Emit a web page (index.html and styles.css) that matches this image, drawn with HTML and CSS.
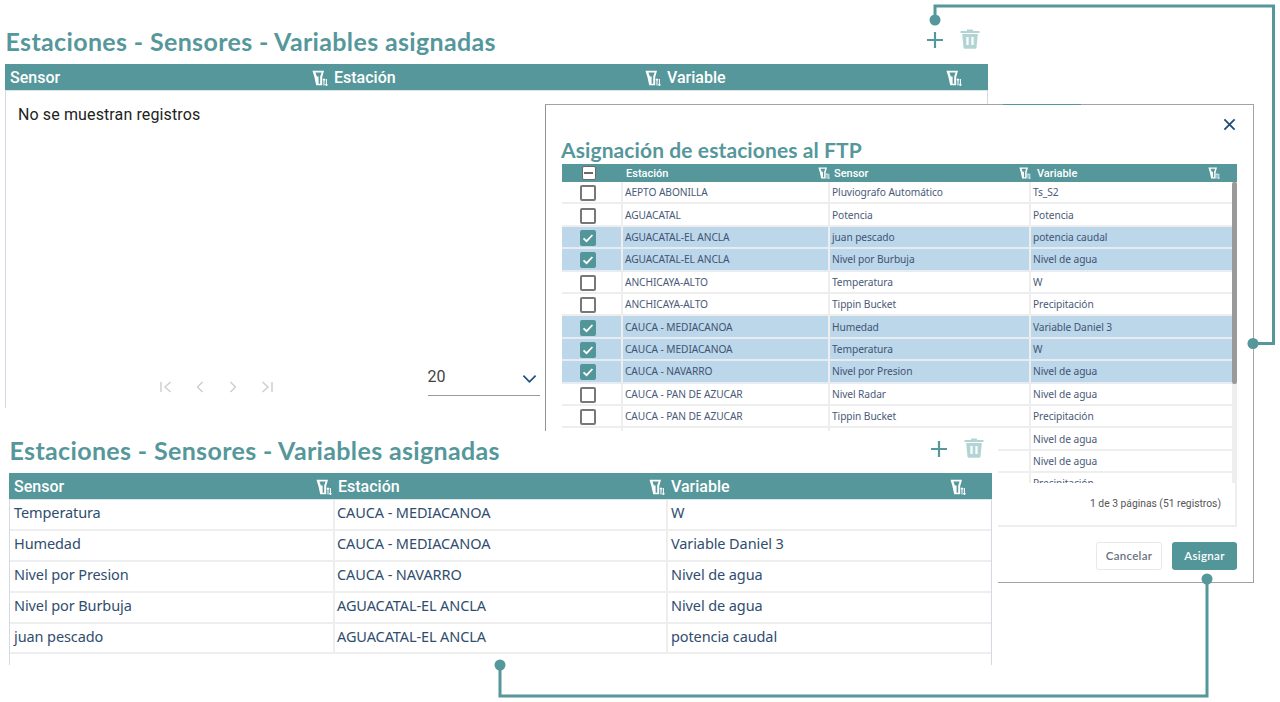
FILE: index.html
```html
<!DOCTYPE html>
<html lang="es">
<head>
<meta charset="utf-8">
<title>Estaciones - Sensores - Variables asignadas</title>
<link rel="stylesheet" href="styles.css">
</head>
<body>
<svg class="sprite" width="0" height="0" aria-hidden="true">
  <symbol id="filter" viewBox="0 0 16 16">
    <path fill-rule="evenodd" d="M.5 .8H12L10.200 7V15.200H4.200L2.400 7ZM3.400 2.400L4.900 6.400H6.600V13.800H8.200V6.400L9.600 2.400Z" fill="currentColor"/>
    <path d="M12 15.500V9M10.900 10.200L12 9L13.100 10.200M14.400 9V15.500M13.300 14.300L14.400 15.500L15.500 14.300" fill="none" stroke="currentColor" stroke-width="1.100"/>
  </symbol>
  <symbol id="plus" viewBox="0 0 18 18">
    <path d="M9 1V17M1 9H17" fill="none" stroke="currentColor" stroke-width="2.200"/>
  </symbol>
  <symbol id="trash" viewBox="0 0 20 21">
    <path d="M7 1.500H13V3H19.500V5H.5V3H7Z" fill="currentColor"/>
    <path fill-rule="evenodd" d="M2.200 6H17.800L16.600 19C16.500 20 15.800 20.800 14.600 20.800H5.400C4.200 20.800 3.500 20 3.400 19ZM6.400 9V17H8.600V9ZM11.400 9V17H13.600V9Z" fill="currentColor"/>
  </symbol>
  <symbol id="check" viewBox="0 0 16 16">
    <path d="M3.500 8.300L6.600 11.200L12.400 5" fill="none" stroke="#fff" stroke-width="1.800"/>
  </symbol>
</svg>

<main class="canvas">

  <section class="panel panel-top">
    <header class="panel-head">
      <h2 class="title">Estaciones - Sensores - Variables asignadas</h2>
      <div class="actions">
        <svg class="ico-plus"><use href="#plus"/></svg>
        <svg class="ico-trash"><use href="#trash"/></svg>
      </div>
    </header>
    <div class="table table-empty">
      <div class="thead">
        <div class="th"><span>Sensor</span><svg class="ico-filter"><use href="#filter"/></svg></div>
        <div class="th"><span>Estación</span><svg class="ico-filter"><use href="#filter"/></svg></div>
        <div class="th"><span>Variable</span><svg class="ico-filter"><use href="#filter"/></svg></div>
      </div>
      <p class="empty">No se muestran registros</p>
      <div class="pager-row">
        <div class="pager">
          <svg class="pg" viewBox="0 0 14 14"><path d="M2 2V12M11.500 2L6 7L11.500 12"/></svg>
          <svg class="pg" viewBox="0 0 14 14"><path d="M9.500 2L4.500 7L9.500 12"/></svg>
          <svg class="pg" viewBox="0 0 14 14"><path d="M4.500 2L9.500 7L4.500 12"/></svg>
          <svg class="pg" viewBox="0 0 14 14"><path d="M12 2V12M2.500 2L8 7L2.500 12"/></svg>
        </div>
        <div class="select">
          <span>20</span>
          <svg class="chev" viewBox="0 0 16 10"><path d="M1.500 1.500L8 8L14.500 1.500"/></svg>
        </div>
      </div>
    </div>
  </section>

  <section class="modal">
    <span class="behind-edge"></span>
    <div class="modal-close">
      <svg class="ico-x" viewBox="0 0 14 14"><path d="M1.500 1.500L12.500 12.500M12.500 1.500L1.500 12.500"/></svg>
    </div>
    <h2 class="modal-title">Asignación de estaciones al FTP</h2>
    <div class="card">
      <div class="m-head">
        <div class="m-th m-center"><span class="cb cb-head"><i></i></span></div>
        <div class="m-th"><span>Estación</span><svg class="ico-filter sm"><use href="#filter"/></svg></div>
        <div class="m-th"><span>Sensor</span><svg class="ico-filter sm"><use href="#filter"/></svg></div>
        <div class="m-th"><span>Variable</span><svg class="ico-filter sm"><use href="#filter"/></svg></div>
      </div>
      <div class="m-scroll">
        <div class="m-rows">
          <div class="m-row"><div class="m-td m-center"><span class="cb"></span></div><div class="m-td">AEPTO ABONILLA</div><div class="m-td">Pluviografo Automático</div><div class="m-td">Ts_S2</div></div>
          <div class="m-row"><div class="m-td m-center"><span class="cb"></span></div><div class="m-td">AGUACATAL</div><div class="m-td">Potencia</div><div class="m-td">Potencia</div></div>
          <div class="m-row sel"><div class="m-td m-center"><span class="cb on"><svg><use href="#check"/></svg></span></div><div class="m-td">AGUACATAL-EL ANCLA</div><div class="m-td">juan pescado</div><div class="m-td">potencia caudal</div></div>
          <div class="m-row sel"><div class="m-td m-center"><span class="cb on"><svg><use href="#check"/></svg></span></div><div class="m-td">AGUACATAL-EL ANCLA</div><div class="m-td">Nivel por Burbuja</div><div class="m-td">Nivel de agua</div></div>
          <div class="m-row"><div class="m-td m-center"><span class="cb"></span></div><div class="m-td">ANCHICAYA-ALTO</div><div class="m-td">Temperatura</div><div class="m-td">W</div></div>
          <div class="m-row"><div class="m-td m-center"><span class="cb"></span></div><div class="m-td">ANCHICAYA-ALTO</div><div class="m-td">Tippin Bucket</div><div class="m-td">Precipitación</div></div>
          <div class="m-row sel"><div class="m-td m-center"><span class="cb on"><svg><use href="#check"/></svg></span></div><div class="m-td">CAUCA - MEDIACANOA</div><div class="m-td">Humedad</div><div class="m-td">Variable Daniel 3</div></div>
          <div class="m-row sel"><div class="m-td m-center"><span class="cb on"><svg><use href="#check"/></svg></span></div><div class="m-td">CAUCA - MEDIACANOA</div><div class="m-td">Temperatura</div><div class="m-td">W</div></div>
          <div class="m-row sel"><div class="m-td m-center"><span class="cb on"><svg><use href="#check"/></svg></span></div><div class="m-td">CAUCA - NAVARRO</div><div class="m-td">Nivel por Presion</div><div class="m-td">Nivel de agua</div></div>
          <div class="m-row"><div class="m-td m-center"><span class="cb"></span></div><div class="m-td">CAUCA - PAN DE AZUCAR</div><div class="m-td">Nivel Radar</div><div class="m-td">Nivel de agua</div></div>
          <div class="m-row"><div class="m-td m-center"><span class="cb"></span></div><div class="m-td">CAUCA - PAN DE AZUCAR</div><div class="m-td">Tippin Bucket</div><div class="m-td">Precipitación</div></div>
          <div class="m-row"><div class="m-td m-center"></div><div class="m-td"></div><div class="m-td"></div><div class="m-td">Nivel de agua</div></div>
          <div class="m-row"><div class="m-td m-center"></div><div class="m-td"></div><div class="m-td"></div><div class="m-td">Nivel de agua</div></div>
          <div class="m-row"><div class="m-td m-center"></div><div class="m-td"></div><div class="m-td"></div><div class="m-td">Precipitación</div></div>
        </div>
        <div class="scrollbar"><div class="thumb"></div></div>
      </div>
      <p class="m-foot">1 de 3 páginas (51 registros)</p>
    </div>
    <div class="modal-btns">
      <button class="btn btn-ghost" type="button">Cancelar</button>
      <button class="btn btn-main" type="button">Asignar</button>
    </div>
  </section>

  <section class="panel panel-bottom">
    <header class="panel-head">
      <h2 class="title">Estaciones - Sensores - Variables asignadas</h2>
      <div class="actions">
        <svg class="ico-plus"><use href="#plus"/></svg>
        <svg class="ico-trash"><use href="#trash"/></svg>
      </div>
    </header>
    <div class="table table-full">
      <div class="thead">
        <div class="th"><span>Sensor</span><svg class="ico-filter"><use href="#filter"/></svg></div>
        <div class="th"><span>Estación</span><svg class="ico-filter"><use href="#filter"/></svg></div>
        <div class="th"><span>Variable</span><svg class="ico-filter"><use href="#filter"/></svg></div>
      </div>
      <div class="tr tall"><div class="td">Temperatura</div><div class="td">CAUCA - MEDIACANOA</div><div class="td">W</div></div>
      <div class="tr tall"><div class="td">Humedad</div><div class="td">CAUCA - MEDIACANOA</div><div class="td">Variable Daniel 3</div></div>
      <div class="tr"><div class="td">Nivel por Presion</div><div class="td">CAUCA - NAVARRO</div><div class="td">Nivel de agua</div></div>
      <div class="tr tall"><div class="td">Nivel por Burbuja</div><div class="td">AGUACATAL-EL ANCLA</div><div class="td">Nivel de agua</div></div>
      <div class="tr"><div class="td">juan pescado</div><div class="td">AGUACATAL-EL ANCLA</div><div class="td">potencia caudal</div></div>
    </div>
  </section>

  <svg class="connectors" viewBox="0 0 1280 702" aria-hidden="true">
    <path d="M935 20V6H1273.500V343.500H1253"/>
    <circle cx="935" cy="20" r="5.500"/>
    <circle cx="1253" cy="343.500" r="5.500"/>
    <path d="M1207 579V696H500V665"/>
    <circle cx="1207" cy="579" r="5.500"/>
    <circle cx="500" cy="665" r="5.500"/>
  </svg>
</main>
</body>
</html>
```
FILE: styles.css
```css
* { box-sizing: border-box; }
html, body { margin: 0; padding: 0; background: #fff; }
.sprite { position: absolute; }
.canvas { position: relative; width: 1280px; height: 702px; overflow: hidden; background: #fff; }

/* windows on the free canvas */
.panel { position: absolute; background: #fff; display: flex; flex-direction: column; }
.panel-top { left: 5px; top: 25px; width: 983px; height: 383px; }
.panel-bottom { left: 0; top: 431px; width: 998px; height: 234px; padding: 3px 6px 0 9px; }
.modal { position: absolute; left: 545px; top: 104px; width: 709px; height: 479px; background: #fff; border: 1px solid #a3a3a3; border-left-color: #8f9698; display: flex; flex-direction: column; padding: 0 16px 0 16px; }
.connectors { position: absolute; left: 0; top: 0; width: 1280px; height: 702px; pointer-events: none; }
.connectors path { fill: none; stroke: #55979b; stroke-width: 3; }
.connectors circle { fill: #55979b; }

/* shared panel */
.panel-head { height: 39px; flex: none; display: flex; justify-content: space-between; align-items: center; padding-right: 8px; }
.title { margin: 0; font: 700 25px/30px "Lato", sans-serif; color: #55979b; white-space: nowrap; letter-spacing: .35px; padding-left: .5px; position: relative; top: -3.500px; }
.actions { display: flex; align-items: center; gap: 16px; position: relative; top: -6px; }
.ico-plus { width: 18px; height: 18px; color: #55979b; position: relative; top: 1px; }
.ico-trash { width: 20px; height: 21px; color: #b2d4d5; }

.table { flex: 1; display: flex; flex-direction: column; border: 1px solid #d3d8e2; border-bottom: 0; border-top-color: #d3d8e2; min-height: 0; }
.thead { display: grid; grid-template-columns: 323px 333px 1fr; height: 27px; flex: none; background: #55979b; border-bottom: 1px solid #d9e6e8; margin: -1px -1px 0; }
.th { display: flex; justify-content: space-between; align-items: center; padding: 2px 0 0 5px; font: 500 16px/1 "Roboto", sans-serif; color: #fff; }
.th:nth-child(n+2) { padding-left: 6px; }
.th:last-child { padding-right: 26px; }
.ico-filter { width: 16px; height: 16px; color: #fff; flex: none; }

.empty { margin: 0; padding: 15px 12px 0; font: 400 16px/18px "Roboto", sans-serif; letter-spacing: .12px; color: #222; }
.pager-row { margin-top: auto; display: flex; align-items: flex-end; padding: 0 0 12px 153px; }
.pager { display: flex; gap: 19.500px; margin-bottom: 2px; }
.pg { width: 14px; height: 14px; }
.pg path { fill: none; stroke: #cfcfcf; stroke-width: 1.500; }
.select { margin-left: 154px; width: 112px; height: 30px; display: flex; justify-content: space-between; align-items: center; border-bottom: 1px solid #9a9a9a; font: 400 16px/1 "Roboto", sans-serif; color: #444; padding: 0 3px 7px 0; }
.chev { width: 15px; height: 10px; position: relative; top: 2px; }
.chev path { fill: none; stroke: #1f4e79; stroke-width: 1.800; }

.tr { display: grid; grid-template-columns: 325px 333px 1fr; height: 30.500px; border-bottom: 2px solid #eee; font: 400 14.500px/1 "Noto Sans", sans-serif; letter-spacing: -.1px; color: #2f4d6e; }
.tr.tall { height: 31px; }
.td { padding: 0 2px; border-right: 2px solid #eee; display: flex; align-items: center; padding-bottom: 4px; white-space: nowrap; }
.td:first-child { padding-left: 4px; }
.td:last-child { border-right: 0; padding-left: 3px; }

/* modal */
.behind-edge { position: absolute; left: 457px; top: -1px; width: 78px; height: 1px; background: #55979b; }
.modal-close { position: absolute; right: 17px; top: 13px; width: 13px; height: 13px; }
.ico-x { display: block; width: 13px; height: 13px; }
.ico-x path { fill: none; stroke: #1f4e79; stroke-width: 2; }
.modal-title { margin: 31px 0 0 -1px; height: 28px; font: 700 21px/27px "Lato", sans-serif; color: #55979b; letter-spacing: .1px; white-space: nowrap; flex: none; }
.card { width: 675px; height: 363px; flex: none; border-right: 2px solid #eee; border-bottom: 2px solid #eee; display: flex; flex-direction: column; }
.m-head { display: grid; grid-template-columns: 61px 207px 201px 1fr; height: 18px; background: #55979b; flex: none; width: 675px; }
.m-th { display: flex; justify-content: space-between; align-items: center; padding: 0 4px; font: 500 11px/1 "Roboto", sans-serif; color: #fff; }
.m-th:last-child { padding-right: 17px; padding-left: 6px; }
.m-th:nth-child(2) { padding: 0 0 0 3px; }
.m-th:nth-child(3) { padding: 0 0 0 4px; }
.ico-filter.sm { width: 12px; height: 12px; }
.m-center { justify-content: center; padding: 0; }
.m-th.m-center { padding-right: 8px; }
.m-scroll { height: 301px; flex: none; display: flex; overflow: hidden; position: relative; width: 675px; }
.m-rows { flex: 1; min-width: 0; }
.m-row { display: grid; grid-template-columns: 61px 207px 201px 1fr; height: 22.420px; border-bottom: 2px solid #eee; font: 400 10.200px/1 "Noto Sans", sans-serif; letter-spacing: -.08px; color: #4a5a78; }
.m-row.sel { background: #bcd6ea; border-bottom-color: #e6ecf1; color: #3f5572; }
.m-td { display: flex; align-items: center; padding: 0 2px; border-right: 2px solid #eee; white-space: nowrap; }
.m-td.m-center { padding: 2px 7px 0 0; justify-content: center; }
.m-td:last-child { border-right: 0; }
.cb { display: flex; width: 16px; height: 16px; border: 2px solid #777; border-radius: 2px; background: #fff; flex: none; }
.cb.on { background: #53969a; border-color: #53969a; }
.cb.on svg { width: 16px; height: 16px; margin: -2px; flex: none; }
.cb-head { width: 14px; height: 14px; border-width: 1.500px; border-color: #6a6a6a; align-items: center; justify-content: center; }
.cb-head i { display: block; width: 9px; height: 1.500px; background: #6a6a6a; }
.scrollbar { width: 5px; flex: none; background: #eee; }
.thumb { height: 202px; background: #9a9a9a; border-radius: 2px; }
.m-foot { margin: 0; padding: 14px 14px 0 0; text-align: right; font: 400 10.300px/14px "Roboto", sans-serif; color: #555; }
.modal-btns { margin-top: 15px; width: 675px; display: flex; justify-content: flex-end; gap: 10px; }
.btn { height: 28px; border-radius: 3px; font: 600 11.500px/1 "Lato", sans-serif; letter-spacing: .3px; padding: 0; }
.btn-ghost { width: 66px; background: #fff; border: 1px solid #e6e8ee; color: #6b7280; }
.btn-main { width: 65px; background: #53969a; border: 0; color: #fff; }
```
